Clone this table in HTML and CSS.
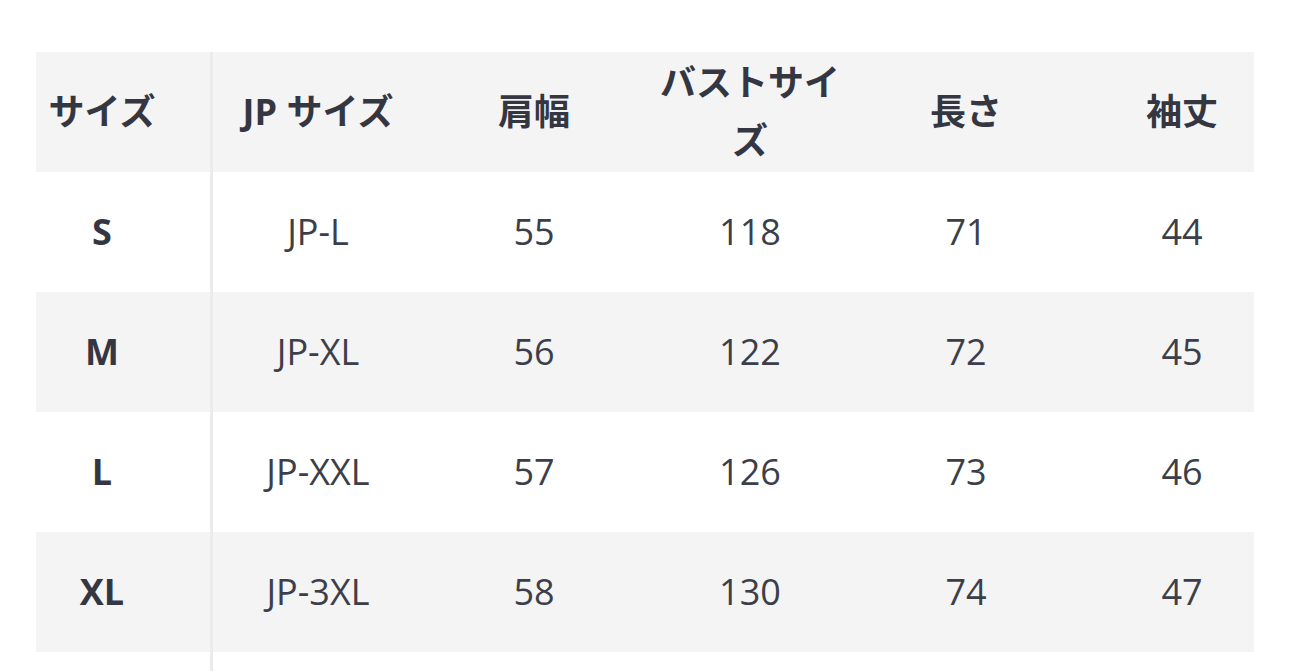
FILE: index.html
```html
<!DOCTYPE html>
<html lang="ja">
<head>
<meta charset="utf-8">
<title>サイズ表</title>
<link rel="stylesheet" href="styles.css">
</head>
<body>
<div class="size-table">
  <div class="row row-gray head">
    <div class="cells">
      <div class="cell first">サイズ</div>
      <div class="cell">JP サイズ</div>
      <div class="cell">肩幅</div>
      <div class="cell">バストサイズ</div>
      <div class="cell">長さ</div>
      <div class="cell">袖丈</div>
    </div>
  </div>
  <div class="row">
    <div class="cells">
      <div class="cell first">S</div>
      <div class="cell">JP-L</div>
      <div class="cell">55</div>
      <div class="cell">118</div>
      <div class="cell">71</div>
      <div class="cell">44</div>
    </div>
  </div>
  <div class="row row-gray">
    <div class="cells">
      <div class="cell first">M</div>
      <div class="cell">JP-XL</div>
      <div class="cell">56</div>
      <div class="cell">122</div>
      <div class="cell">72</div>
      <div class="cell">45</div>
    </div>
  </div>
  <div class="row">
    <div class="cells">
      <div class="cell first">L</div>
      <div class="cell">JP-XXL</div>
      <div class="cell">57</div>
      <div class="cell">126</div>
      <div class="cell">73</div>
      <div class="cell">46</div>
    </div>
  </div>
  <div class="row row-gray">
    <div class="cells">
      <div class="cell first">XL</div>
      <div class="cell">JP-3XL</div>
      <div class="cell">58</div>
      <div class="cell">130</div>
      <div class="cell">74</div>
      <div class="cell">47</div>
    </div>
  </div>
  <div class="row row-tail">
    <div class="cells">
      <div class="cell first"></div>
      <div class="cell"></div>
      <div class="cell"></div>
      <div class="cell"></div>
      <div class="cell"></div>
      <div class="cell"></div>
    </div>
  </div>
</div>
</body>
</html>
```

FILE: styles.css
```css
html, body {
  margin: 0;
  padding: 0;
  background: #ffffff;
}

body {
  font-family: "Open Sans", "Noto Sans CJK JP", sans-serif;
  font-size: 36px;
  line-height: 1.6;
  color: #3c3f49;
  overflow: hidden;
}

.size-table {
  padding-top: 52px;
  width: 1290px;
}

.row {
  margin: 0 36px;
  height: 120px;
  background: #ffffff;
}

.row-gray {
  background: #f4f4f4;
}

.row-tail {
  height: 60px;
}

.cells {
  margin: 0 -36px;
  height: 100%;
  display: grid;
  grid-template-columns: 210px repeat(5, 1fr);
}

.cell {
  display: flex;
  align-items: center;
  justify-content: center;
  text-align: center;
  padding: 0 16px;
  box-sizing: border-box;
}

.cell.first {
  font-weight: 700;
  color: #343741;
  padding: 0 6px 0 0;
}

.cell.first + .cell {
  border-left: 3px solid #ebebeb;
  padding-left: 13px;
}

.head .cell {
  font-weight: 700;
  color: #343741;
}
```
